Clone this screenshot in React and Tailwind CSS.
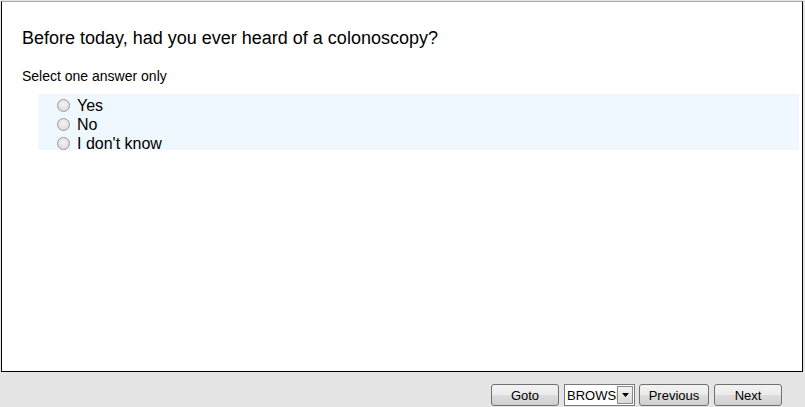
import React from "react";

function Radio() {
  return (
    <span className="inline-block w-[13px] h-[13px] rounded-full border border-[#9a9a9a] bg-[radial-gradient(circle_at_50%_40%,#f4f4f4,#d4d4d4)] shrink-0" />
  );
}

function Btn({ children, w }) {
  return (
    <button
      className={`h-[22px] ${w} rounded-[3px] border border-[#707070] bg-[linear-gradient(#f2f2f2,#ebebeb_50%,#dddddd_50%,#cfcfcf)] text-[13px] text-black leading-none flex items-center justify-center`}
    >
      {children}
    </button>
  );
}

export default function App() {
  return (
    <div className="w-[805px] h-[407px] bg-[#e5e5e5] flex flex-col font-['Liberation_Sans',Arial,sans-serif] overflow-hidden">
      <div className="mt-[1px] ml-[1px] w-[802px] h-[371px] bg-white border-l border-r border-b border-black border-t border-t-[#a8a8a8] flex flex-col">
        <div className="pl-[20px] pt-[25px] text-[18px] leading-[22px] text-black">
          Before today, had you ever heard of a colonoscopy?
        </div>
        <div className="pl-[20px] mt-[19px] text-[14px] leading-[16px] text-black">
          Select one answer only
        </div>
        <div className="ml-[36px] mr-[3px] mt-[10px] h-[56px] bg-[#f0f8ff] pl-[19px] pt-[2px] flex flex-col">
          {["Yes", "No", "I don't know"].map((t) => (
            <div key={t} className="h-[19px] flex items-center gap-[7px] text-[16px] text-black">
              <Radio />
              <span className="leading-[19px]">{t}</span>
            </div>
          ))}
        </div>
      </div>
      <div className="flex items-start justify-end pr-[23px] pt-[12px]">
        <Btn w="w-[68px]">Goto</Btn>
        <div className="ml-[5px] w-[71px] h-[22px] border border-[#7a7a7a] bg-white flex items-center">
          <span className="flex-1 overflow-hidden text-[13px] pl-[2px] leading-none whitespace-nowrap">BROWSE</span>
          <span className="w-[16px] h-[18px] mr-[1px] border border-[#8a8a8a] bg-[linear-gradient(#f4f4f4,#d8d8d8)] flex items-center justify-center">
            <svg width="7" height="4" viewBox="0 0 7 4"><path d="M0 0h7L3.5 4z" fill="#000" /></svg>
          </span>
        </div>
        <div className="ml-[4px]">
          <Btn w="w-[70px]">Previous</Btn>
        </div>
        <div className="ml-[5px]">
          <Btn w="w-[68px]">Next</Btn>
        </div>
      </div>
    </div>
  );
}
